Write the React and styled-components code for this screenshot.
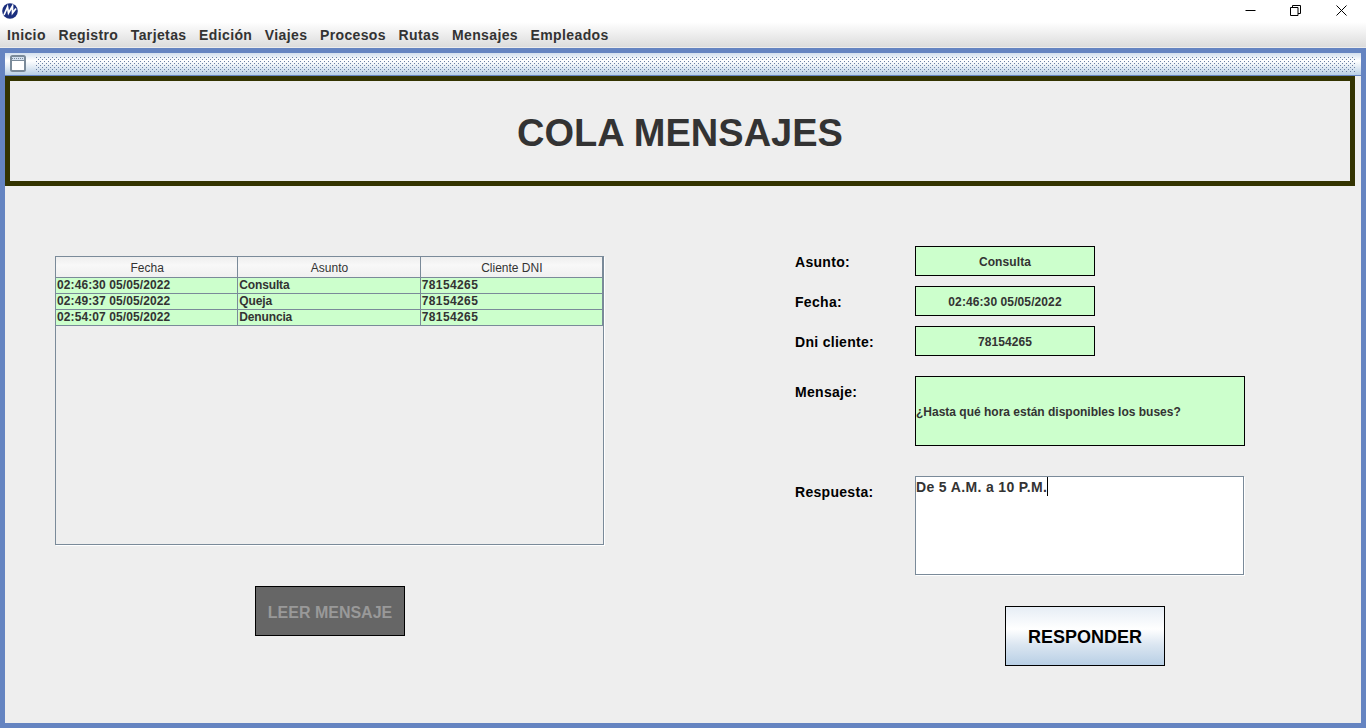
import React from "react";
import styled, { createGlobalStyle } from "styled-components";

const Global = createGlobalStyle`
  html, body { margin: 0; padding: 0; height: 100%; overflow: hidden; background: #fff; }
  body { font-family: "Liberation Sans", Arial, sans-serif; color: #333; }
  #root { height: 100%; }
  * { box-sizing: border-box; }
`;

const Screen = styled.div`
  width: 1366px; height: 728px; display: flex; flex-direction: column;
`;
const TitleBar = styled.div`
  height: 22px; display: flex; align-items: flex-start; justify-content: space-between;
  padding: 0 2px; background: #fff;
`;
const AppLogo = styled.svg`
  width: 16px; height: 16px; margin-top: 3px; display: block;
`;
const WinControls = styled.div`display: flex;`;
const WinButton = styled.div`
  width: 45.5px; height: 21px; display: flex; align-items: center; justify-content: center;
  svg { width: 11px; height: 11px; display: block; }
`;
const MenuBar = styled.nav`
  height: 26px; display: flex; align-items: center; padding: 0;
  background: linear-gradient(#ffffff, #dcdcdc);
  border-bottom: 1px solid #ececec;
`;
const MenuItem = styled.span`
  font-size: 14px; font-weight: 700; color: #333; padding: 0 6.3px; line-height: 20px;
  letter-spacing: 0.375px;
  &:first-child { padding-left: 7px; }
`;
const Frame = styled.div`
  flex: 1; min-height: 0; display: flex; flex-direction: column;
  border: 5px solid #6584c1; background: #eeeeee;
`;
const InnerTitle = styled.div`
  height: 23px; flex: none; display: flex; align-items: center; gap: 10px; padding: 0 6px 1px 5px;
  border-bottom: 1px solid #6584c1;
  background: linear-gradient(#d3e0ef 0%, #ffffff 35%, #e6eef6 60%, #b8cfe5 100%);
`;
const WindowIcon = styled.svg`width: 16px; height: 17px; flex: none; display: block;`;
const Bumps = styled.svg`
  flex: 1; min-width: 0; height: 15px; align-self: flex-start; margin-top: 4px; display: block;
`;
const Header = styled.header`
  height: 110px; flex: none; width: 1350px; display: flex; align-items: center; justify-content: center;
  border: 5px solid #333300; background: #eeeeee;
`;
const Heading = styled.h1`
  margin: 3px 0 0; font-size: 38px; font-weight: 700; color: #333; line-height: 44px;
`;
const Body = styled.main`flex: 1; min-height: 0; display: flex;`;
const LeftPanel = styled.section`
  width: 790px; padding: 70px 0 0 50px; display: flex; flex-direction: column; align-items: flex-start;
`;
const TableBox = styled.div`
  width: 549px; height: 289px; border: 1px solid #7a8a99; box-shadow: 1px 1px 0 #fff;
`;
const Grid = styled.table`
  width: 547px; table-layout: fixed; border-collapse: separate; border-spacing: 0;
  font-size: 12px; color: #333;
`;
const Th = styled.th`
  height: 20px; padding: 2px 0 0 1px; font-weight: 400; text-align: center; line-height: 18px;
  background: linear-gradient(#eeeeee, #f8f8f8 40%, #f0f0f0);
  border-right: 1px solid #7a8a99; border-bottom: 1px solid #7a8a99;
`;
const Td = styled.td`
  height: 16px; padding: 0 0 0 1px; font-weight: 700; line-height: 15px; background: #ccffcc;
  border-right: 1px solid #7a8a99; border-bottom: 1px solid #7a8a99; white-space: nowrap;
  letter-spacing: ${p => p.$spacing}px;
`;
const ReadButton = styled.button`
  width: 150px; height: 50px; margin: 41px 0 0 200px; padding: 3px 0 0;
  border: 1px solid #000; background: #666666; color: #999999;
  font: 700 16px "Liberation Sans", Arial, sans-serif;
`;
const RightPanel = styled.section`
  flex: 1; padding: 60px 0 0 0; display: grid; grid-template-columns: 120px 1fr; align-content: start;
`;
const Label = styled.label`
  font-size: 14px; font-weight: 700; color: #000; line-height: 32px; height: 30px;
  letter-spacing: 0.3px;
  margin-top: ${p => p.$top || 0}px;
`;
const Field = styled.div`
  width: 180px; height: 30px; border: 1px solid #000; background: #ccffcc; padding-top: 2px;
  display: flex; align-items: center; justify-content: center;
  font-size: 12px; font-weight: 700; color: #333; margin-top: ${p => p.$top || 0}px;
  letter-spacing: 0.1px;
`;
const MessageField = styled.div`
  width: 330px; height: 70px; margin-top: 20px; border: 1px solid #000; background: #ccffcc;
  display: flex; align-items: center; padding: 2px 0 0;
  font-size: 12px; font-weight: 700; color: #333;
`;
const AnswerField = styled.div`
  width: 329px; height: 99px; margin-top: 30px; border: 1px solid #7a8a99; background: #fff;
  box-shadow: 1px 1px 0 #fff;
  font-size: 14px; font-weight: 700; color: #333; line-height: 20px; letter-spacing: 0.35px;
`;
const Caret = styled.span`
  display: inline-block; width: 1px; height: 19px; background: #000; vertical-align: top;
`;
const ReplyButton = styled.button`
  grid-column: 2; width: 160px; height: 60px; margin: 31px 0 0 90px; padding: 2px 0 0;
  border: 1px solid #000; color: #000;
  background: linear-gradient(#e6edf5 0%, #ffffff 38%, #dbe6f1 65%, #b8cfe5 100%);
  font: 700 18px "Liberation Sans", Arial, sans-serif;
`;

const menu = ["Inicio", "Registro", "Tarjetas", "Edición", "Viajes", "Procesos", "Rutas", "Mensajes", "Empleados"];
const rows = [
  ["02:46:30 05/05/2022", "Consulta", "78154265"],
  ["02:49:37 05/05/2022", "Queja", "78154265"],
  ["02:54:07 05/05/2022", "Denuncia", "78154265"],
];
const columnSpacing = [0.1, -0.15, 0.4];

export default function App() {
  return (
    <Screen>
      <Global />
      <TitleBar>
        <AppLogo viewBox="0 0 16 16">
          <circle cx="8" cy="8" r="7.8" fill="#1b2f7e" />
          <path d="M2 12 5.5 4 6.5 10 10.5 3 10.5 10 14 5.5" fill="none" stroke="#fff" strokeWidth="1.7" />
        </AppLogo>
        <WinControls>
          <WinButton>
            <svg viewBox="0 0 11 11"><path d="M0.5 5.5h10" stroke="#000" fill="none" /></svg>
          </WinButton>
          <WinButton>
            <svg viewBox="0 0 11 11"><path d="M0.5 2.5h7.5v8h-7.5zM2.5 2.5v-2h8v8h-2.5" stroke="#000" fill="none" /></svg>
          </WinButton>
          <WinButton>
            <svg viewBox="0 0 11 11"><path d="M0.5 0.5l10 10M10.5 0.5l-10 10" stroke="#000" fill="none" /></svg>
          </WinButton>
        </WinControls>
      </TitleBar>
      <MenuBar>
        {menu.map(m => <MenuItem key={m}>{m}</MenuItem>)}
      </MenuBar>
      <Frame>
        <InnerTitle>
          <WindowIcon viewBox="0 0 16 17">
            <rect x="1" y="1" width="14" height="15" rx="1.5" fill="#ffffff" stroke="#7a8a99" strokeWidth="2" />
            <rect x="2" y="2" width="12" height="3" fill="#d3e0ef" />
            <path d="M2 3.5h12" stroke="#7a8a99" strokeWidth="1" strokeDasharray="1 1" />
            <path d="M2 5.5h12" stroke="#7a8a99" strokeWidth="1" />
          </WindowIcon>
          <Bumps shapeRendering="crispEdges">
            <defs>
              <pattern id="bumps" width="4" height="4" patternUnits="userSpaceOnUse">
                <rect x="0" y="0" width="1" height="1" fill="#6c80a3" />
                <rect x="2" y="2" width="1" height="1" fill="#6c80a3" />
              </pattern>
            </defs>
            <rect width="100%" height="100%" fill="url(#bumps)" />
          </Bumps>
        </InnerTitle>
        <Header><Heading>COLA MENSAJES</Heading></Header>
        <Body>
          <LeftPanel>
            <TableBox>
              <Grid>
                <thead>
                  <tr><Th>Fecha</Th><Th>Asunto</Th><Th>Cliente DNI</Th></tr>
                </thead>
                <tbody>
                  {rows.map(r => (
                    <tr key={r[0]}>{r.map((c, i) => <Td key={i} $spacing={columnSpacing[i]}>{c}</Td>)}</tr>
                  ))}
                </tbody>
              </Grid>
            </TableBox>
            <ReadButton disabled>LEER MENSAJE</ReadButton>
          </LeftPanel>
          <RightPanel>
            <Label>Asunto:</Label>
            <Field>Consulta</Field>
            <Label $top={10}>Fecha:</Label>
            <Field $top={10}>02:46:30 05/05/2022</Field>
            <Label $top={10}>Dni cliente:</Label>
            <Field $top={10}>78154265</Field>
            <Label $top={20}>Mensaje:</Label>
            <MessageField>¿Hasta qué hora están disponibles los buses?</MessageField>
            <Label $top={30}>Respuesta:</Label>
            <AnswerField>De 5 A.M. a 10 P.M.<Caret /></AnswerField>
            <ReplyButton>RESPONDER</ReplyButton>
          </RightPanel>
        </Body>
      </Frame>
    </Screen>
  );
}
